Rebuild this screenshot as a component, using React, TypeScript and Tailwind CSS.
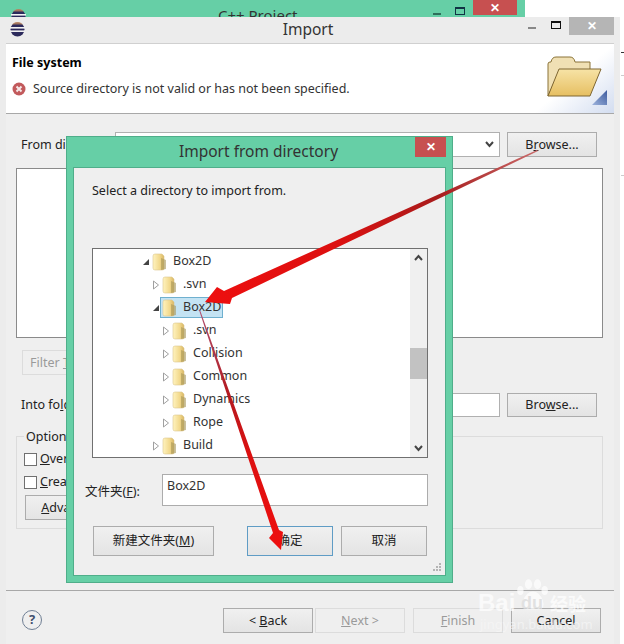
const uiFont = { fontFamily: '"Noto Sans", "Noto Sans CJK SC", sans-serif' };

function EclipseIcon() {
  return (
    <svg width="15" height="15" viewBox="0 0 15 15">
      <circle cx="7.5" cy="7.5" r="7" fill="#2c2a5c" />
      <path d="M2 2.5 A7 7 0 0 1 13 2.5 Z" fill="#c08a60" opacity="0.8" />
      <rect x="0" y="5" width="15" height="1.6" fill="#f2f2f2" />
      <rect x="0" y="8.4" width="15" height="1.6" fill="#f2f2f2" />
    </svg>
  );
}

function SmallFolder() {
  return (
    <svg width="15" height="18" viewBox="0 0 15 18" className="shrink-0">
      <defs>
        <linearGradient id="smallFolder" x1="0" y1="0" x2="1" y2="0">
          <stop offset="0" stopColor="#fff3bf" />
          <stop offset="0.6" stopColor="#f2d98d" />
          <stop offset="1" stopColor="#d8b664" />
        </linearGradient>
      </defs>
      <path d="M1 3 Q1 1 3 1 H10 L12 3 V16 Q12 17 10 17 H3 Q1 17 1 15 Z" fill="url(#smallFolder)" stroke="#dcc88e" strokeWidth="0.6" />
      <path d="M9 5 L14 7 V16 L9 17 Z" fill="#a8975a" opacity="0.6" />
    </svg>
  );
}

function TreeArrow({ open }: { open: boolean }) {
  return (
    <svg width="8" height="10" viewBox="0 0 8 10" className="shrink-0">
      {open ? (
        <path d="M7 2 V8 H1 Z" fill="#444" />
      ) : (
        <path d="M1.5 1 L6.5 5 L1.5 9 Z" fill="#fff" stroke="#a0a0a0" />
      )}
    </svg>
  );
}

function Btn({ children, className, disabled }: { children: React.ReactNode; className: string; disabled?: boolean }) {
  return (
    <div
      className={
        "flex shrink-0 items-center justify-center border pt-px text-[12.5px] " +
        (disabled
          ? "border-[#dcdcdc] bg-[#efefef] text-[#9a9a9a] "
          : "border-[#acacac] bg-linear-to-b from-[#f0f0f0] to-[#e4e4e4] text-[#222] ") +
        className
      }
    >
      {children}
    </div>
  );
}

const treeRows = [
  { name: "Box2D", pad: "pl-[49px]", open: true },
  { name: ".svn", pad: "pl-[59px]", open: false },
  { name: "Box2D", pad: "pl-[59px]", open: true, selected: true },
  { name: ".svn", pad: "pl-[69px]", open: false },
  { name: "Collision", pad: "pl-[69px]", open: false },
  { name: "Common", pad: "pl-[69px]", open: false },
  { name: "Dynamics", pad: "pl-[69px]", open: false },
  { name: "Rope", pad: "pl-[69px]", open: false },
  { name: "Build", pad: "pl-[59px]", open: false },
];

function BackWindow() {
  return (
    <div className="absolute top-0 left-0 flex h-[17px] w-[525px] items-start overflow-hidden bg-[#66cfa6]">
      <div className="mt-[9px] ml-[11px]">
        <EclipseIcon />
      </div>
      <div className="mt-[8px] ml-[192px] text-[15px] leading-[15px] text-[#333]">C++ Project</div>
      <div className="mt-[13px] ml-auto h-[2px] w-[8px] bg-[#2f6f5a]" />
      <div className="mt-[7px] ml-[14px] h-[8px] w-[10px] border border-t-2 border-[#134]" />
      <div className="mr-[8px] ml-[8px] flex h-[15px] w-[44px] items-center justify-center bg-[#c75050] text-[12px] font-bold text-white">
        ✕
      </div>
    </div>
  );
}

function ImportWindow() {
  return (
    <div className="absolute top-[17px] left-0 flex h-[627px] w-[620px] flex-col bg-[#ececec] pr-[6px] pl-[6px]">
      {/* title bar */}
      <div className="relative flex h-[27px] shrink-0 items-center justify-center border-b border-[#d0d0d0] pr-[4px] pb-[1px] text-[15.5px] text-[#333]">
        <div className="absolute top-[5px] left-[4px]">
          <EclipseIcon />
        </div>
        Import
        <div className="absolute top-[10px] right-[78px] h-[2px] w-[8px] bg-[#888]" />
        <div className="absolute top-[4px] right-[53px] h-[8px] w-[10px] border border-t-2 border-[#111]" />
        <div className="absolute top-0 right-0 flex h-[18px] w-[45px] items-center justify-center bg-[#b5b5b5] text-[12px] font-bold text-white">
          ✕
        </div>
      </div>

      {/* banner */}
      <div className="relative flex h-[70px] shrink-0 flex-col border-b border-[#a8a8a8] bg-white px-[6px]">
        <div className="mt-[11px] text-[12.5px] leading-[16px] font-bold text-black">File system</div>
        <div className="mt-[9px] flex items-center gap-[7px] text-[12.5px] leading-[18px] text-[#333]">
          <svg width="14" height="14" viewBox="0 0 14 14">
            <circle cx="7" cy="7" r="6.5" fill="#c25a5c" />
            <path d="M4.5 4.5 L9.5 9.5 M9.5 4.5 L4.5 9.5" stroke="#f5e8e8" strokeWidth="2" />
          </svg>
          Source directory is not valid or has not been specified.
        </div>
        <div className="absolute top-0 right-0 h-[69px] w-[80px] bg-linear-to-tl from-[#d3ddf0] via-[#ffffff] to-[#ffffff]" />
        <svg width="56" height="44" viewBox="0 0 56 44" className="absolute top-[12px] right-[12px]">
          <defs>
            <linearGradient id="bigFolder" x1="0" y1="0" x2="0" y2="1">
              <stop offset="0" stopColor="#f7e3a6" />
              <stop offset="1" stopColor="#e6bf62" />
            </linearGradient>
          </defs>
          <path d="M2 40 V8 Q2 6 4 6 H5 Q6 1 10 1 H24 Q28 1 29 6 H44 V14 H14 Z" fill="#f0e0b4" stroke="#8a7338" />
          <path d="M2 40 L13 13 H55 L44 40 Z" fill="url(#bigFolder)" stroke="#7e6632" />
        </svg>
        <svg width="15" height="15" viewBox="0 0 15 15" className="absolute top-[46px] right-[7px]">
          <defs>
            <linearGradient id="cornerMark" x1="0" y1="1" x2="1" y2="0">
              <stop offset="0" stopColor="#9db3dc" />
              <stop offset="1" stopColor="#3c5a9e" />
            </linearGradient>
          </defs>
          <path d="M15 0 V15 H0 Z" fill="url(#cornerMark)" />
        </svg>
      </div>

      {/* form */}
      <div className="flex flex-1 flex-col bg-[#efefef] pr-[10px] pl-[10px]">
        <div className="mt-[18px] flex h-[25px] shrink-0 items-center">
          <div className="w-[99px] pt-px pl-[5px] text-[12.5px] text-[#222]">From directory:</div>
          <div className="flex h-[25px] w-[385px] items-center justify-end border border-[#b0b0b0] bg-white pr-[5px]">
            <svg width="9" height="7" viewBox="0 0 9 7">
              <path d="M1 1 L4.5 5 L8 1" fill="none" stroke="#444" strokeWidth="2" />
            </svg>
          </div>
          <Btn className="ml-[7px] h-[25px] w-[90px]">
            <span>B<u>r</u>owse...</span>
          </Btn>
        </div>
        <div className="mt-[11px] h-[170px] w-[587px] shrink-0 border border-[#8a8a8a] bg-white" />
        <Btn disabled className="mt-[12px] ml-[6px] h-[25px] w-[90px] justify-start!">
          <span className="pl-[7px]">Filter <u>T</u>ypes...</span>
        </Btn>
        <div className="mt-[18px] flex h-[24px] shrink-0 items-center">
          <div className="w-[99px] pt-px pl-[5px] text-[12.5px] text-[#222]">Into fo<u>l</u>der:</div>
          <div className="h-[24px] w-[385px] border border-[#b0b0b0] bg-white" />
          <Btn className="ml-[7px] h-[24px] w-[90px]">
            <span>Bro<u>w</u>se...</span>
          </Btn>
        </div>
        <div className="relative mt-[19px] flex h-[93px] w-[587px] shrink-0 flex-col border border-[#dcdcdc] pl-[7px]">
          <div className="absolute -top-[9px] left-[7px] bg-[#efefef] px-[2px] text-[12.5px] leading-[17px] text-[#222]">Options</div>
          <div className="mt-[15px] flex items-center gap-[3px] text-[12.5px] leading-[14px] text-[#222]">
            <div className="h-[13px] w-[13px] border border-[#707070] bg-white" />
            <span><u>O</u>verwrite</span>
          </div>
          <div className="mt-[9px] flex items-center gap-[3px] text-[12.5px] leading-[14px] text-[#222]">
            <div className="h-[13px] w-[13px] border border-[#707070] bg-white" />
            <span><u>C</u>reate</span>
          </div>
          <Btn className="mt-[6px] ml-[1px] h-[25px] w-[90px]">
            <span><u>A</u>dvanced</span>
          </Btn>
        </div>
      </div>

      {/* footer */}
      <div className="flex h-[54px] shrink-0 items-start border-t border-[#a8a8a8] bg-[#efefef] pt-[17px]">
        <div className="mt-[2px] ml-[16px] flex h-[20px] w-[20px] items-center justify-center rounded-full border-[1.5px] border-[#6f7f94] text-[13px] font-bold text-[#3f4f6e]">
          ?
        </div>
        <Btn className="ml-[181px] h-[25px] w-[90px]">
          <span>&lt; <u>B</u>ack</span>
        </Btn>
        <Btn disabled className="ml-[2px] h-[25px] w-[90px]">
          <span><u>N</u>ext &gt;</span>
        </Btn>
        <Btn disabled className="ml-[8px] h-[25px] w-[90px]">
          <span><u>F</u>inish</span>
        </Btn>
        <Btn className="ml-[8px] h-[25px] w-[90px]">Cancel</Btn>
      </div>
    </div>
  );
}

function DirectoryDialog() {
  return (
    <div className="absolute top-[136px] left-[66px] flex h-[447px] w-[387px] flex-col border border-[#4fae8a] bg-[#66cfa6] px-[6px] pb-[6px]">
      <div className="relative flex h-[30px] shrink-0 items-center justify-center pr-[2px] text-[15.5px] text-[#333]">
        Import from directory
        <div className="absolute top-0 right-0 flex h-[20px] w-[31px] items-center justify-center bg-[#c75050] text-[12px] font-bold text-white">
          ✕
        </div>
      </div>
      <div className="relative flex flex-1 flex-col border border-[#4fae8a] bg-[#efefef] pr-[18px] pl-[18px]">
        <div className="mt-[14px] text-[12.5px] leading-[18px] text-[#222]">Select a directory to import from.</div>
        <div className="mt-[48px] flex h-[210px] w-[336px] shrink-0 border border-[#707070] bg-white">
          <div className="mt-px flex-1">
            {treeRows.map((row, i) => (
              <div key={i} className={"flex h-[23px] items-center text-[12.5px] text-[#333] " + row.pad}>
                <TreeArrow open={row.open} />
                <div
                  className={
                    "flex h-[21px] items-center gap-[6px] pr-[1px] pl-[1px] " +
                    (row.selected ? "border border-[#6fb0cf] bg-[#c4e3f3]" : "border border-transparent")
                  }
                >
                  <SmallFolder />
                  <span>{row.name}</span>
                </div>
              </div>
            ))}
          </div>
          <div className="flex w-[17px] flex-col bg-[#f0f0f0]">
            <div className="flex h-[17px] items-center justify-center">
              <svg width="9" height="7" viewBox="0 0 9 7">
                <path d="M1 6 L4.5 2 L8 6" fill="none" stroke="#444" strokeWidth="2" />
              </svg>
            </div>
            <div className="mt-[82px] h-[31px] bg-[#c2c2c2]" />
            <div className="mt-auto flex h-[17px] items-center justify-center">
              <svg width="9" height="7" viewBox="0 0 9 7">
                <path d="M1 1 L4.5 5 L8 1" fill="none" stroke="#444" strokeWidth="2" />
              </svg>
            </div>
          </div>
        </div>
        <div className="mt-[16px] flex h-[32px] w-[336px] shrink-0">
          <div className="-ml-[7px] w-[77px] pt-[9px] text-[12.5px] text-[#222]">
            文件夹(<u>F</u>):
          </div>
          <div className="flex-1 border border-[#acacac] bg-white pt-[1px] pl-[4px] text-[12.5px] leading-[20px] text-[#333]">Box2D</div>
        </div>
        <div className="mt-[20px] flex h-[30px] shrink-0 pl-[1px]">
          <Btn className="h-[30px] w-[121px]">
            <span>新建文件夹(<u>M</u>)</span>
          </Btn>
          <Btn className="ml-[33px] h-[30px] w-[86px] border-[#5f9cc5]!">确定</Btn>
          <Btn className="ml-[8px] h-[30px] w-[86px]">取消</Btn>
        </div>
        <svg width="12" height="12" viewBox="0 0 12 12" className="absolute right-[3px] bottom-[2px]">
          <path d="M9 2h2v2H9zM6 5h2v2H6zM9 5h2v2H9zM3 8h2v2H3zM6 8h2v2H6zM9 8h2v2H9z" fill="#b4b4b4" />
        </svg>
      </div>
    </div>
  );
}

function RedArrows() {
  return (
    <svg width="624" height="644" viewBox="0 0 624 644" className="pointer-events-none absolute top-0 left-0">
      <defs>
        <linearGradient id="arrowA" gradientUnits="userSpaceOnUse" x1="537" y1="150" x2="205" y2="302">
          <stop offset="0" stopColor="#c96a6a" />
          <stop offset="0.3" stopColor="#a81c1c" />
          <stop offset="0.6" stopColor="#dc1010" />
          <stop offset="1" stopColor="#ee0f0f" />
        </linearGradient>
        <linearGradient id="arrowB" gradientUnits="userSpaceOnUse" x1="199" y1="310" x2="281" y2="550">
          <stop offset="0" stopColor="#b05070" />
          <stop offset="0.35" stopColor="#b31a20" />
          <stop offset="0.6" stopColor="#dc1010" />
          <stop offset="1" stopColor="#ee0f0f" />
        </linearGradient>
      </defs>
      <polygon points="205,302 217,287 224,291 537,150 538,151 232,298 230,304" fill="url(#arrowA)" />
      <polygon points="199,310 200,310 279,530 283,532 281,550 269,538 273,533" fill="url(#arrowB)" />
    </svg>
  );
}

function Watermark() {
  return (
    <div className="pointer-events-none absolute top-[578px] left-[478px] h-[54px] w-[112px] text-white opacity-70">
      <svg width="36" height="34" viewBox="0 0 40 36" className="absolute top-0 left-[37px]">
        <ellipse cx="6" cy="13" rx="3.5" ry="5" fill="#fff" />
        <ellipse cx="15" cy="6" rx="4" ry="5.5" fill="#fff" />
        <ellipse cx="25" cy="6" rx="4" ry="5.5" fill="#fff" />
        <ellipse cx="33" cy="13" rx="3.5" ry="5" fill="#fff" />
        <path d="M20 14 Q27 14 31 24 Q34 34 26 34 H14 Q6 34 9 24 Q13 14 20 14 Z" fill="#fff" />
      </svg>
      <div className="absolute top-[12px] left-0 font-['Liberation_Sans',sans-serif] text-[24px] leading-[26px] font-bold">Bai</div>
      <div className="absolute top-[15px] left-[43px] font-['Liberation_Sans',sans-serif] text-[18px] leading-[20px] font-bold text-[#dcdcdc]">du</div>
      <div className="absolute top-[13px] left-[72px] font-['Noto_Sans_CJK_SC',sans-serif] text-[18px] leading-[24px] font-bold">经验</div>
    </div>
  );
}

export default function App() {
  return (
    <div className="relative h-[644px] w-[624px] overflow-hidden bg-white" style={uiFont}>
      <BackWindow />
      <ImportWindow />
      {/* scraps of the window behind, on the right edge */}
      <div className="absolute top-[52px] left-[621px] h-px w-[3px] bg-[#333]" />
      <div className="absolute top-[75px] left-[621px] h-px w-[3px] bg-[#ccc]" />
      <div className="absolute top-[175px] left-[621px] h-px w-[3px] bg-[#ccc]" />
      <DirectoryDialog />
      <RedArrows />
      <Watermark />
      <div className="pointer-events-none absolute top-[616px] left-[480px] text-[13px] leading-[16px] text-[#f7f7f7] opacity-70">jingyan.baidu.com</div>
    </div>
  );
}
